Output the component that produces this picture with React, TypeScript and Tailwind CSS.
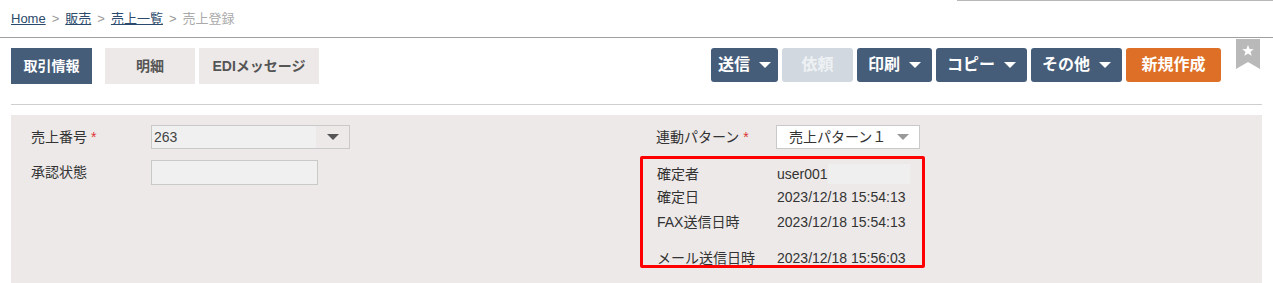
const font = { fontFamily: '"Liberation Sans", "Noto Sans CJK JP", sans-serif' };

function Caret({ className = 'border-t-white' }: { className?: string }) {
  return <span className={`inline-block w-0 h-0 border-l-[6px] border-r-[6px] border-t-[6px] border-l-transparent border-r-transparent ${className}`} />;
}

function ActionButton({ label, width, caret = true, color = 'dark' }: { label: string; width: string; caret?: boolean; color?: 'dark' | 'disabled' | 'orange' }) {
  const cls = color === 'dark'
    ? 'bg-[#455d79] text-white'
    : color === 'orange'
      ? 'bg-[#dd7026] text-white'
      : 'bg-[#d1d8df] text-[#eef1f4]';
  return (
    <button className={`${width} h-[34px] flex items-center justify-center gap-[9px] rounded-[3px] text-[16px] font-bold whitespace-nowrap ${cls}`}>
      {label}
      {caret && <Caret />}
    </button>
  );
}

export default function App() {
  return (
    <div className="w-[1273px] h-[283px] bg-white text-[#333] text-[14px] overflow-hidden" style={font}>
      {/* パンくず */}
      <div className="h-[38px] relative border-b border-[#a0a0a0]">
        <div className="absolute right-0 top-0 w-[316px] h-px bg-[#b8b8b8]" />
        <div className="flex items-center gap-[6px] pl-[11px] pt-[9px] text-[13px]">
          <a className="text-[#2c4a6b] underline">Home</a>
          <span className="text-[#999]">&gt;</span>
          <a className="text-[#2c4a6b] underline">販売</a>
          <span className="text-[#999]">&gt;</span>
          <a className="text-[#2c4a6b] underline">売上一覧</a>
          <span className="text-[#999]">&gt;</span>
          <span className="text-[#aaa]">売上登録</span>
        </div>
      </div>

      {/* タブ + ボタン */}
      <div className="flex items-start justify-between pl-[11px] pr-[13px] pt-[10px] h-[66px]">
        <div className="flex gap-[4px] text-[14px] font-bold">
          <div className="w-[81px] h-[36px] flex items-center justify-center bg-[#455d79] text-white">取引情報</div>
          <div className="w-[90px] h-[36px] flex items-center justify-center bg-[#ede9e8] text-[#555] ml-[9px]">明細</div>
          <div className="w-[120px] h-[36px] flex items-center justify-center bg-[#ede9e8] text-[#555]">EDIメッセージ</div>
        </div>
        <div className="flex items-start">
          <div className="flex gap-[4px]">
            <ActionButton label="送信" width="w-[67px]" />
            <ActionButton label="依頼" width="w-[71px]" caret={false} color="disabled" />
            <ActionButton label="印刷" width="w-[75px]" />
            <ActionButton label="コピー" width="w-[91px]" />
            <ActionButton label="その他" width="w-[91px]" />
            <ActionButton label="新規作成" width="w-[95px]" caret={false} color="orange" />
          </div>
          <div className="ml-[15px] -mt-[9px]">
            <svg width="24" height="30" viewBox="0 0 24 30">
              <path d="M0 0 H24 V30 L12 23 L0 30 Z" fill="#b9b9b9" />
              <path d="M12 6 L13.6 10 L17.8 10.2 L14.5 12.8 L15.7 16.8 L12 14.5 L8.3 16.8 L9.5 12.8 L6.2 10.2 L10.4 10 Z" fill="#fff" />
            </svg>
          </div>
        </div>
      </div>

      <div className="mx-[11px] border-t border-[#cfcfcf]" />

      {/* フォーム */}
      <div className="mx-[11px] mt-[10px] bg-[#ede9e8] h-[170px] flex pt-[10px]">
        <div className="w-[629px] pl-[20px] flex flex-col gap-[11px]">
          <div className="flex items-center h-[24px]">
            <span className="w-[120px]">売上番号 <span className="text-[#d33]">*</span></span>
            <div className="w-[199px] h-[24px] flex border border-[#c9c9c9] bg-[#f0f0f0]">
              <span className="flex-1 pl-[2px] leading-[22px] text-[#444]">263</span>
              <span className="w-[33px] flex items-center justify-center bg-[#ece9e8]"><Caret className="border-t-[#555]" /></span>
            </div>
          </div>
          <div className="flex items-center h-[25px]">
            <span className="w-[120px]">承認状態</span>
            <div className="w-[167px] h-[25px] border border-[#c9c9c9] bg-[#f0f0f0]" />
          </div>
        </div>

        <div className="flex flex-col">
          <div className="flex items-center h-[24px] pl-[16px]">
            <span className="w-[120px]">連動パターン <span className="text-[#d33]">*</span></span>
            <div className="w-[144px] h-[24px] flex items-center border border-[#c9c9c9] bg-white pl-[12px] pr-[10px]">
              <span className="flex-1">売上パターン１</span>
              <Caret className="border-t-[#999] border-l-[4px] border-r-[4px] border-t-[6px]" />
            </div>
          </div>
          <div className="mt-[7px] w-[285px] h-[112px] border-[3px] border-[#ff0000] rounded-[2px] pl-[14px] pt-[5px] flex flex-col overflow-hidden">
            <div className="flex h-[20px] items-center shrink-0">
              <span className="w-[120px]">確定者</span>
              <span>user001</span>
              <span className="w-[82px] h-[20px] bg-[#f0efef]" />
            </div>
            <div className="flex h-[24px] items-end shrink-0">
              <span className="w-[120px]">確定日</span>
              <span>2023/12/18 15:54:13</span>
            </div>
            <div className="flex h-[25px] items-end shrink-0">
              <span className="w-[120px]">FAX送信日時</span>
              <span>2023/12/18 15:54:13</span>
            </div>
            <div className="flex h-[36px] items-end shrink-0">
              <span className="w-[120px]">メール送信日時</span>
              <span>2023/12/18 15:56:03</span>
            </div>
          </div>
        </div>
      </div>
    </div>
  );
}
